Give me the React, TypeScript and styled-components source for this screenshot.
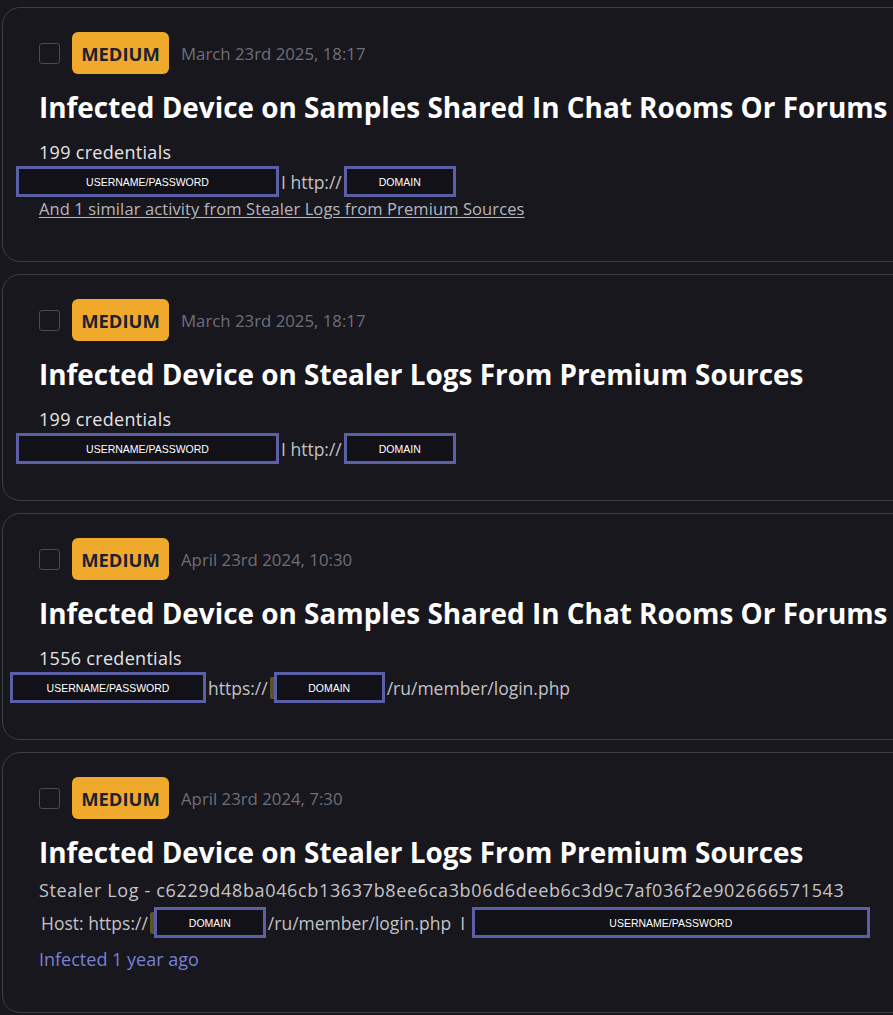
import React from 'react';
import styled, { createGlobalStyle } from 'styled-components';

const GlobalStyle = createGlobalStyle`
  html, body {
    margin: 0;
    padding: 0;
    background: #18171d;
    overflow: hidden;
  }
  body {
    font-family: 'Open Sans', Lato, sans-serif;
    color: #e6e6e8;
  }
`;

type Part =
  | { kind: 'text'; value: string }
  | { kind: 'redact'; label: string; width: number; shift?: number; mark?: boolean };

type Alert = {
  date: string;
  title: string;
  count?: string;
  hash?: string;
  parts: Part[];
  similar?: string;
  infected?: string;
};

const alerts: Alert[] = [
  {
    date: 'March 23rd 2025, 18:17',
    title: 'Infected Device on Samples Shared In Chat Rooms Or Forums',
    count: '199 credentials',
    parts: [
      { kind: 'redact', label: 'USERNAME/PASSWORD', width: 263, shift: -23 },
      { kind: 'text', value: 'I http://' },
      { kind: 'redact', label: 'DOMAIN', width: 112 },
    ],
    similar: 'And 1 similar activity from Stealer Logs from Premium Sources',
  },
  {
    date: 'March 23rd 2025, 18:17',
    title: 'Infected Device on Stealer Logs From Premium Sources',
    count: '199 credentials',
    parts: [
      { kind: 'redact', label: 'USERNAME/PASSWORD', width: 263, shift: -23 },
      { kind: 'text', value: 'I http://' },
      { kind: 'redact', label: 'DOMAIN', width: 112 },
    ],
  },
  {
    date: 'April 23rd 2024, 10:30',
    title: 'Infected Device on Samples Shared In Chat Rooms Or Forums',
    count: '1556 credentials',
    parts: [
      { kind: 'redact', label: 'USERNAME/PASSWORD', width: 196, shift: -29 },
      { kind: 'text', value: 'https://' },
      { kind: 'redact', label: 'DOMAIN', width: 111, mark: true },
      { kind: 'text', value: '/ru/member/login.php' },
    ],
  },
  {
    date: 'April 23rd 2024, 7:30',
    title: 'Infected Device on Stealer Logs From Premium Sources',
    hash: 'Stealer Log - c6229d48ba046cb13637b8ee6ca3b06d6deeb6c3d9c7af036f2e902666571543',
    parts: [
      { kind: 'text', value: 'Host: https://' },
      { kind: 'redact', label: 'DOMAIN', width: 112, mark: true },
      { kind: 'text', value: '/ru/member/login.php  I ' },
      { kind: 'redact', label: 'USERNAME/PASSWORD', width: 398 },
    ],
    infected: 'Infected 1 year ago',
  },
];

const App = () => (
  <>
    <GlobalStyle />
    <List>
      {alerts.map((a, i) => (
        <Card key={i}>
          <Header>
            <Checkbox />
            <Severity>MEDIUM</Severity>
            <DateText>{a.date}</DateText>
          </Header>
          <Title>{a.title}</Title>
          {a.count && <Count>{a.count}</Count>}
          {a.hash && <Hash>{a.hash}</Hash>}
          <Row $host={!!a.hash}>
            {a.parts.map((p, j) =>
              p.kind === 'text' ? (
                <UrlText key={j}>{p.value}</UrlText>
              ) : (
                <React.Fragment key={j}>
                  {p.mark && <Mark />}
                  <Redact $w={p.width} $shift={p.shift || 0}>
                    {p.label}
                  </Redact>
                </React.Fragment>
              )
            )}
          </Row>
          {a.similar && <Similar>{a.similar}</Similar>}
          {a.infected && <Infected>{a.infected}</Infected>}
        </Card>
      ))}
    </List>
  </>
);

export default App;

const List = styled.div`
  display: flex;
  flex-direction: column;
  gap: 12px;
  padding: 7px 0 0 2px;
  width: 940px;
`;

const Card = styled.div`
  display: flex;
  flex-direction: column;
  align-items: flex-start;
  border: 1.5px solid #3e3d4a;
  border-radius: 18px;
  padding: 24px 36px 36px;
`;

const Header = styled.div`
  display: flex;
  align-items: center;
  gap: 12px;
`;

const Checkbox = styled.span`
  width: 19px;
  height: 19px;
  border: 1.5px solid #4a4955;
  border-radius: 3px;
`;

const Severity = styled.span`
  display: flex;
  align-items: center;
  justify-content: center;
  width: 97px;
  height: 42px;
  box-sizing: border-box;
  border-radius: 6px;
  background: #efaa2c;
  color: #1d2133;
  font-size: 18.4px;
  font-weight: 700;
`;

const DateText = styled.span`
  color: #6f6e79;
  font-size: 16.8px;
`;

const Title = styled.h2`
  margin: 16px 0 0;
  color: #ffffff;
  font-size: 27.9px;
  line-height: 34px;
  font-weight: 700;
  white-space: nowrap;
`;

const Count = styled.div`
  margin-top: 18px;
  color: #e4e4e6;
  font-size: 18px;
  letter-spacing: 0.3px;
  line-height: 20px;
`;

const Hash = styled.div`
  margin-top: 11px;
  color: #c4c4c8;
  font-size: 18px;
  letter-spacing: 0.65px;
  line-height: 20px;
  white-space: nowrap;
`;

const Row = styled.div<{ $host: boolean }>`
  display: flex;
  align-items: center;
  height: 31px;
  margin-top: ${p => (p.$host ? '7px' : '4px')};
  white-space: pre;
`;

const UrlText = styled.span`
  color: #c2c2c6;
  font-size: 17.5px;
  padding: 0 2px;
`;

const Mark = styled.span`
  width: 7px;
  height: 22px;
  margin-right: -3px;
  background: #5c5426;
  border-radius: 2px;
`;

const Redact = styled.span<{ $w: number; $shift: number }>`
  display: flex;
  align-items: center;
  justify-content: center;
  width: ${p => p.$w}px;
  height: 31px;
  margin-left: ${p => p.$shift}px;
  box-sizing: border-box;
  border: 3px solid #5b5fa6;
  background: #121117;
  color: #ffffff;
  font-family: 'Liberation Sans', Arial, sans-serif;
  font-size: 10.5px;
`;

const Similar = styled.a`
  margin: 2px 0 6px;
  color: #b6b6bc;
  font-size: 16.5px;
  letter-spacing: 0.1px;
  line-height: 20px;
  text-decoration: underline;
  text-underline-offset: 2px;
`;

const Infected = styled.div`
  margin: 10px 0 6px;
  color: #7880d6;
  font-size: 18px;
  line-height: 22px;
`;
